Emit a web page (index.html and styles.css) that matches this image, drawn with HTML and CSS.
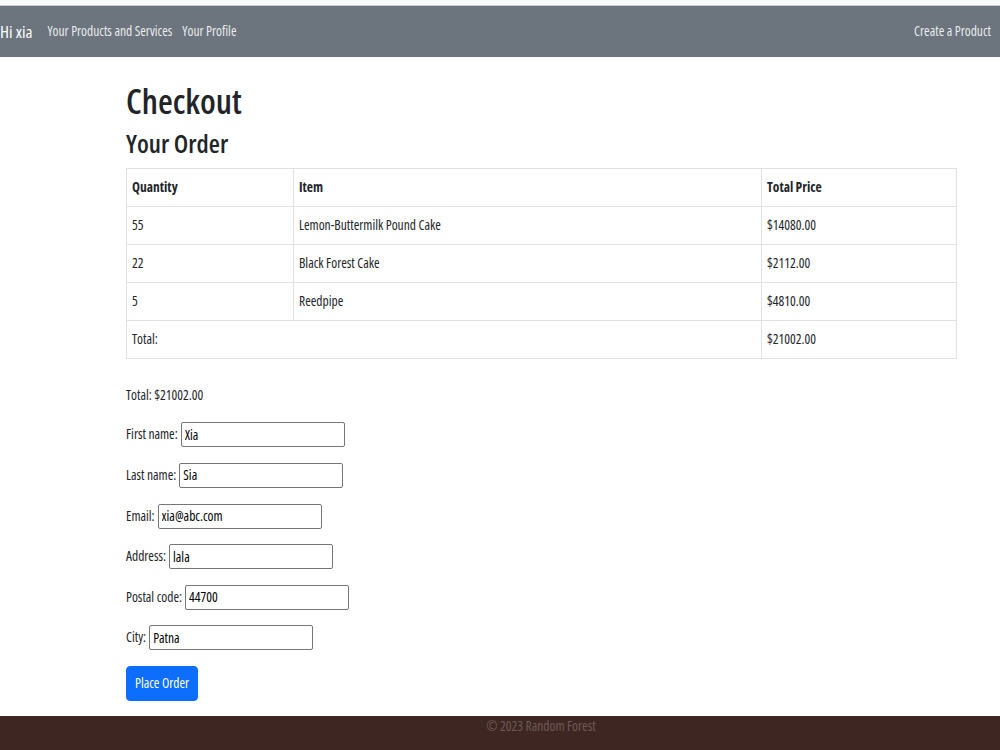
FILE: index.html
```html
<!DOCTYPE html>
<html lang="en">
<head>
<meta charset="utf-8">
<title>Checkout</title>
<link rel="stylesheet" href="styles.css">
</head>
<body>
<div class="topstrip"></div>
<nav class="navbar">
  <a class="brand" href="#">Hi xia</a>
  <ul class="nav-links">
    <li><a href="#">Your Products and Services</a></li>
    <li><a href="#">Your Profile</a></li>
  </ul>
  <a class="nav-right" href="#">Create a Product</a>
</nav>
<main class="container">
  <h1 class="title">Checkout</h1>
  <h2 class="subtitle">Your Order</h2>
  <table class="order-table">
    <colgroup>
      <col class="col-qty">
      <col class="col-item">
      <col class="col-price">
    </colgroup>
    <thead>
      <tr><th>Quantity</th><th>Item</th><th>Total Price</th></tr>
    </thead>
    <tbody>
      <tr><td>55</td><td>Lemon-Buttermilk Pound Cake</td><td>$14080.00</td></tr>
      <tr><td>22</td><td>Black Forest Cake</td><td>$2112.00</td></tr>
      <tr><td>5</td><td>Reedpipe</td><td>$4810.00</td></tr>
      <tr><td colspan="2">Total:</td><td>$21002.00</td></tr>
    </tbody>
  </table>
  <form class="checkout-form">
    <p class="line">Total: $21002.00</p>
    <div class="field"><label>First name:</label><input type="text" value="Xia"></div>
    <div class="field"><label>Last name:</label><input type="text" value="Sia"></div>
    <div class="field"><label>Email:</label><input type="text" value="xia@abc.com"></div>
    <div class="field"><label>Address:</label><input type="text" value="lala"></div>
    <div class="field"><label>Postal code:</label><input type="text" value="44700"></div>
    <div class="field"><label>City:</label><input type="text" value="Patna"></div>
    <button type="button" class="btn-primary">Place Order</button>
  </form>
</main>
<footer class="footer">
  <div class="footer-inner">© 2023 Random Forest</div>
</footer>
</body>
</html>
```
FILE: styles.css
```css
* { box-sizing: border-box; }
body {
  margin: 0;
  font-family: "Open Sans", "Liberation Sans", sans-serif;
  font-stretch: 75%;
  font-size: 13.5px;
  line-height: 1.5;
  color: #212529;
  background: #fff;
}
.topstrip {
  height: 6px;
  background: #f8f9fa;
  border-bottom: 1px solid #c9ccd0;
}
.navbar {
  display: flex;
  align-items: center;
  height: 51px;
  background: #6c757d;
  padding: 0 9px 0 0;
}
.navbar a { text-decoration: none; }
.brand {
  color: #fff;
  font-size: 17px;
  margin-right: 10px;
  line-height: 1;
}
.nav-links {
  display: flex;
  list-style: none;
  margin: 0;
  padding: 0;
  flex: 1;
}
.nav-links a, .nav-right {
  display: block;
  color: rgba(255,255,255,0.88);
  font-size: 13.5px;
  padding: 0 5px;
}
.nav-right { padding: 0; }
.container {
  width: 830px;
  margin-left: 126px;
  padding-top: 24px;
}
.title {
  font-size: 34px;
  font-weight: 560;
  line-height: 1.2;
  margin: 0 0 6px;
}
.subtitle {
  font-size: 25.5px;
  font-weight: 560;
  line-height: 1.2;
  margin: 0 0 10px;
}
.order-table {
  width: 830px;
  border-collapse: collapse;
  border: 1px solid #dee2e6;
  margin-bottom: 26px;
  table-layout: fixed;
}
.col-qty { width: 167px; }
.col-item { width: 468px; }
.col-price { width: 195px; }
.order-table th, .order-table td {
  border: 1px solid #dee2e6;
  padding: 8px 5px;
  text-align: left;
  font-size: 13.5px;
  line-height: 21px;
  vertical-align: top;
}
.order-table th { font-weight: 700; }
.checkout-form .line { margin: 0 0 16px; line-height: 21px; }
.field {
  display: flex;
  align-items: center;
  gap: 3px;
  height: 25px;
  margin-bottom: 15.6px;
}
.field label { line-height: 21px; }
.field input {
  width: 164px;
  height: 25px;
  margin: 0;
  border: 1px solid #767676;
  border-radius: 2px;
  padding: 1px 3px;
  font-family: inherit;
  font-stretch: 75%;
  font-size: 13.5px;
  color: #000;
}
.btn-primary {
  display: block;
  background: #0d6efd;
  color: #fff;
  border: 1px solid #0d6efd;
  border-radius: 4px;
  font-family: inherit;
  font-stretch: 75%;
  font-size: 13.5px;
  line-height: 21px;
  padding: 6px 8px;
  margin-bottom: 15px;
  cursor: pointer;
}
.footer {
  background: #3e2723;
  padding: 0 0 24px;
}
.footer-inner {
  width: 830px;
  margin-left: 126px;
  text-align: center;
  color: #6e5a55;
  font-size: 13.5px;
  line-height: 21px;
}
```
